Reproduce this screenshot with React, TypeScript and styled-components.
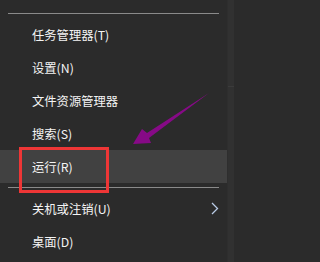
import styled, { createGlobalStyle } from 'styled-components';

const GlobalStyle = createGlobalStyle`
  html, body {
    margin: 0;
    padding: 0;
    background: #2b2b2b;
  }
`;

const Page = styled.div`
  position: relative;
  display: flex;
  width: 234px;
  height: 262px;
  overflow: hidden;
  font-family: 'Noto Sans CJK SC', 'Noto Sans', sans-serif;
`;

const Menu = styled.div`
  display: flex;
  flex-direction: column;
  width: 227px;
  padding-top: 13px;
  background: #2b2b2b;
`;

const ScrollStrip = styled.div`
  flex: 1;
  background: #313131;
  border-left: 1px solid #2e2e2e;
  display: flex;
  flex-direction: column;
  padding-top: 86px;
`;

const StripLine = styled.div`
  height: 1px;
  background: #3b3b3b;
`;

const Separator = styled.div<{ gap?: number }>`
  height: 1px;
  margin: ${(p) => (p.gap ?? 4)}px 8px 4px;
  background: #8a8a8a;
`;

const Item = styled.div<{ active?: boolean }>`
  position: relative;
  display: flex;
  align-items: center;
  justify-content: space-between;
  height: 33px;
  padding: 0 8px 0 32px;
  background: ${(p) => (p.active ? '#414141' : 'transparent')};
  color: #f4f4f4;
  font-size: 12.3px;
  font-weight: 400;
  white-space: nowrap;
`;

const Highlight = styled.div`
  position: absolute;
  left: 19px;
  top: -3px;
  width: 90px;
  height: 46px;
  box-sizing: border-box;
  border: 3px solid #ee3636;
  pointer-events: none;
`;

const Annotation = styled.svg`
  position: absolute;
  left: 0;
  top: 0;
  pointer-events: none;
`;

const Chevron = () => (
  <svg width="8" height="13" viewBox="0 0 8 13">
    <polyline points="1,1 6.5,6.5 1,12" fill="none" stroke="#b9cbe6" strokeWidth="1.3" />
  </svg>
);

const App = () => {
  return (
    <>
      <GlobalStyle />
      <Page>
        <Menu>
          <Separator gap={0} />
          <Item>任务管理器(T)</Item>
          <Item>设置(N)</Item>
          <Item>文件资源管理器</Item>
          <Item>搜索(S)</Item>
          <Item active>
            运行(R)
            <Highlight />
          </Item>
          <Separator />
          <Item>
            关机或注销(U)
            <Chevron />
          </Item>
          <Item>桌面(D)</Item>
        </Menu>
        <ScrollStrip>
          <StripLine />
        </ScrollStrip>
        <Annotation width="234" height="262" viewBox="0 0 234 262">
          <polygon
            points="209,93 147,133 142,129 133,144 151,143 149,138"
            fill="#860a86"
          />
        </Annotation>
      </Page>
    </>
  );
};

export default App;
